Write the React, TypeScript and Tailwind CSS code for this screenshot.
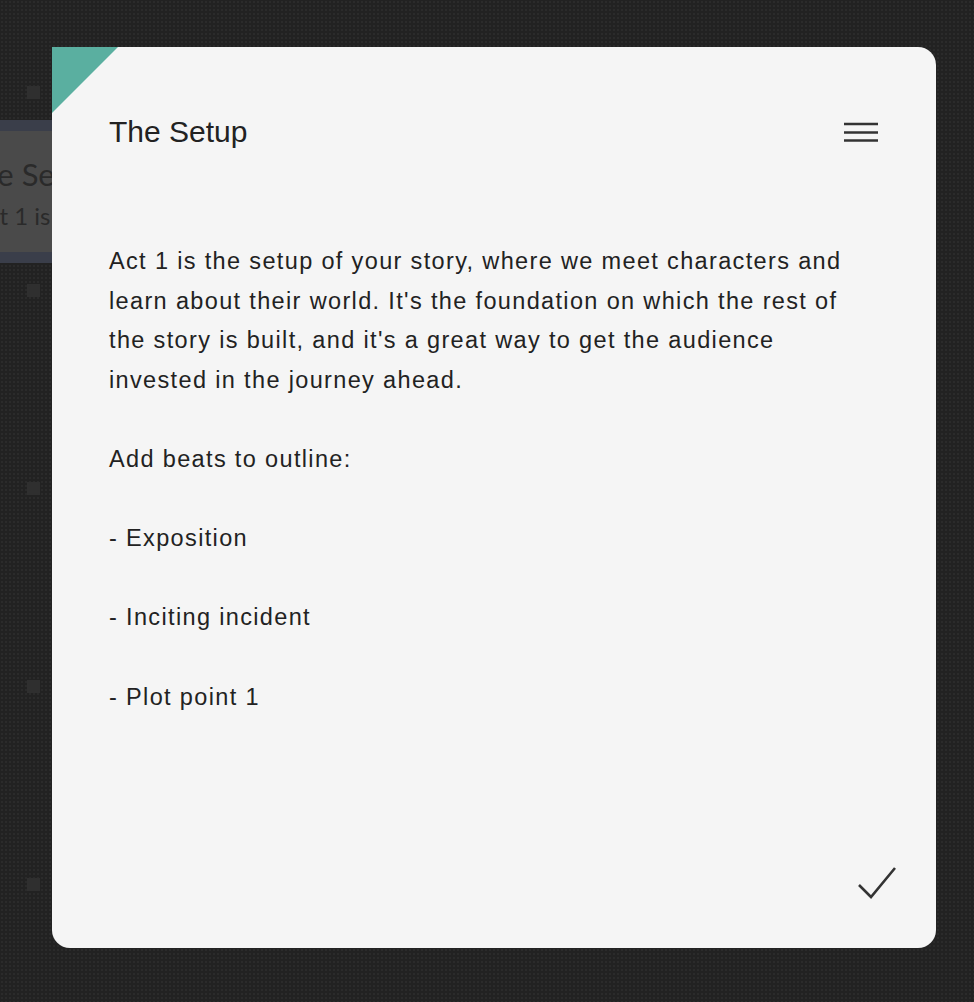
import React from 'react';

const beats = ['Exposition', 'Inciting incident', 'Plot point 1'];

function Handle() {
  return <div className="w-[13px] h-[13px] bg-[#2f2f2f]" />;
}

export default function App() {
  return (
    <div className="relative w-[974px] h-[1002px] overflow-hidden bg-[#222222] [background-image:radial-gradient(circle,#2b2b2b_1px,transparent_1px)] [background-size:4px_4px] font-['Liberation_Sans',Arial,sans-serif]">
      {/* Outline behind the modal */}
      <div className="flex flex-col pl-[27px] pt-[86px]">
        <Handle />
        <div className="h-[185px] pt-[21px]">
          <div className="ml-[-107px] w-[700px] h-[143px] border-y-[11px] border-[#3a3e4a] bg-[#4a4a4a] pl-[42px] pt-[22px] font-['Lato',sans-serif] text-[#2a2a2a]">
            <div className="text-[31px] leading-[42px]">The Setup</div>
            <div className="text-[24px] leading-[34px] ml-[10px] mt-[4px]">Act 1 is the setup of your story</div>
          </div>
        </div>
        <Handle />
        <div className="h-[185px]" />
        <Handle />
        <div className="h-[185px]" />
        <Handle />
        <div className="h-[185px]" />
        <Handle />
      </div>

      {/* Beat card modal */}
      <div className="absolute left-[52px] top-[47px] w-[884px] h-[901px] rounded-[18px] rounded-tl-none bg-[#f5f5f5] flex flex-col pl-[57px] pr-[58px] pb-[48px] text-[#222222]">
        <div className="absolute top-0 left-0 w-[66px] h-[66px] bg-[#5aafa0] [clip-path:polygon(0_0,100%_0,0_100%)]" />

        <div className="flex items-center justify-between pt-[67px]">
          <h1 className="text-[30px] leading-[36px]">The Setup</h1>
          <button>
            <svg width="34" height="20" viewBox="0 0 34 20" fill="none" stroke="#333" strokeWidth="2.5">
              <line x1="0" y1="2" x2="34" y2="2" />
              <line x1="0" y1="10.5" x2="34" y2="10.5" />
              <line x1="0" y1="18.5" x2="34" y2="18.5" />
            </svg>
          </button>
        </div>

        <div className="mt-[92px] text-[23.5px] leading-[39.6px] tracking-[1.35px]">
          <p>
            Act 1 is the setup of your story, where we meet characters and learn about their world. It's the
            foundation on which the rest of the story is built, and it's a great way to get the audience invested
            in the journey ahead.
          </p>
          <p className="mt-[39.6px]">Add beats to outline:</p>
          {beats.map((b) => (
            <p key={b} className="mt-[39.6px]">- {b}</p>
          ))}
        </div>

        <div className="mt-auto flex justify-end mr-[-20px]">
          <svg width="42" height="36" viewBox="0 0 42 36" fill="none" stroke="#333" strokeWidth="2.6">
            <polyline points="3,21 15,33 39,4" />
          </svg>
        </div>
      </div>
    </div>
  );
}
